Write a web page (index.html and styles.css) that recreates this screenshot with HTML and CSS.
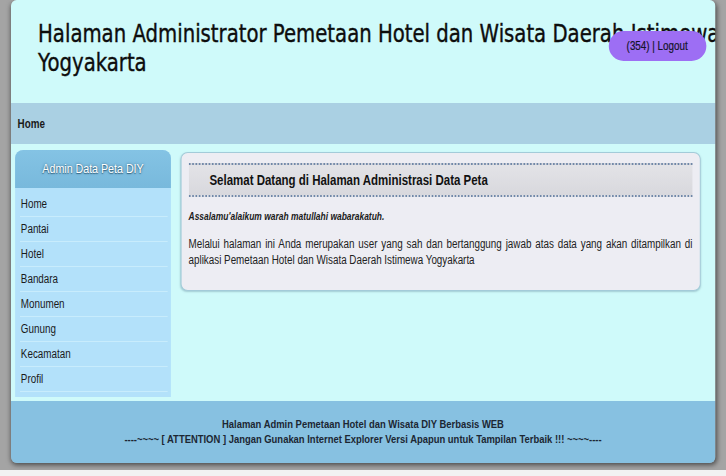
FILE: index.html
```html
<!DOCTYPE html>
<html lang="id">
<head>
<meta charset="utf-8">
<title>Halaman Administrator</title>
<link rel="stylesheet" href="styles.css">
</head>
<body>
<div class="page">
  <header class="header">
    <h1 class="title">Halaman Administrator Pemetaan Hotel dan Wisata Daerah Istimewa Yogyakarta</h1>
    <a class="logout" href="#">(354) | Logout</a>
  </header>

  <nav class="nav">
    <a class="nav-link" href="#">Home</a>
  </nav>

  <div class="main">
    <aside class="sidebar">
      <div class="sidebar-head">Admin Data Peta DIY</div>
      <ul class="menu">
        <li class="menu-item"><a href="#">Home</a></li>
        <li class="menu-item"><a href="#">Pantai</a></li>
        <li class="menu-item"><a href="#">Hotel</a></li>
        <li class="menu-item"><a href="#">Bandara</a></li>
        <li class="menu-item"><a href="#">Monumen</a></li>
        <li class="menu-item"><a href="#">Gunung</a></li>
        <li class="menu-item"><a href="#">Kecamatan</a></li>
        <li class="menu-item"><a href="#">Profil</a></li>
      </ul>
    </aside>

    <section class="content">
      <h2 class="content-head">Selamat Datang di Halaman Administrasi Data Peta</h2>
      <p class="greet">Assalamu'alaikum warah matullahi wabarakatuh.</p>
      <p class="text">Melalui halaman ini Anda merupakan user yang sah dan bertanggung jawab atas data yang akan ditampilkan di aplikasi Pemetaan Hotel dan Wisata Daerah Istimewa Yogyakarta</p>
    </section>
  </div>

  <footer class="footer">
    <div>Halaman Admin Pemetaan Hotel dan Wisata DIY Berbasis WEB</div>
    <div>----~~~~ [ ATTENTION ] Jangan Gunakan Internet Explorer Versi Apapun untuk Tampilan Terbaik !!! ~~~~----</div>
  </footer>
</div>
</body>
</html>
```
FILE: styles.css
```css
html {
  background: #f2f2f2;
  overflow: hidden;
}

body {
  margin: 0;
  padding: 0 11px 7px;
  background: #a4a4a4;
  font-family: "Liberation Sans", Arial, sans-serif;
  color: #1a1a1a;
}

a {
  color: inherit;
  text-decoration: none;
}

/* The page is laid out at a wider width and condensed horizontally,
   which gives every font the narrow look of the original theme. */
.page {
  width: 858.5px;
  transform: scaleX(0.82);
  transform-origin: 0 0;
  overflow: hidden;
  border-radius: 7px / 6px;
  box-shadow: 1px 2px 6px rgba(0, 0, 0, 0.55);
}

/* top banner */
.header {
  position: relative;
  height: 103px;
  box-sizing: border-box;
  padding: 20px 0 0 33px;
  background: #cffafa;
}

.title {
  margin: 0;
  width: 900px;
  font-family: "DejaVu Sans", sans-serif;
  font-weight: normal;
  font-size: 24px;
  line-height: 29px;
  color: #0d0d0d;
  -webkit-text-stroke: 0.4px #0d0d0d;
}

.logout {
  position: absolute;
  top: 31px;
  right: 11px;
  width: 119px;
  height: 30px;
  border-radius: 18px / 15px;
  background: #9d6ef4;
  text-align: center;
  font-size: 12px;
  line-height: 30px;
  color: #14142a;
  -webkit-text-stroke: 0.2px #14142a;
}

/* breadcrumb bar */
.nav {
  display: flex;
  align-items: center;
  height: 41px;
  padding-left: 8px;
  background: #aad0e3;
}

.nav-link {
  font-weight: bold;
  font-size: 12px;
  color: #1a1a1a;
}

/* body area */
.main {
  display: flex;
  align-items: flex-start;
  gap: 12px;
  height: 257px;
  box-sizing: border-box;
  padding: 6px 18px 0 5px;
  background: #cffafa;
}

.sidebar {
  width: 190px;
  flex: none;
  background: #b3e1fa;
  border-radius: 10px 10px 0 0 / 8px 8px 0 0;
}

.sidebar-head {
  height: 38px;
  border-radius: 10px 10px 0 0 / 8px 8px 0 0;
  background: linear-gradient(#84c3e4, #78b9dc);
  color: #fff;
  text-shadow: 0 0 3px #3a6a86, 0 1px 1px #3a6a86;
  font-size: 13px;
  line-height: 38px;
  text-align: center;
}

.menu {
  list-style: none;
  margin: 0;
  padding: 4px 4px 5px 6px;
}

.menu-item {
  height: 24px;
  border-bottom: 1px solid #c8ecfc;
  padding-left: 1px;
  font-size: 12px;
  line-height: 25px;
  color: #1a1a1a;
}

.content {
  flex: 1;
  margin-top: 2px;
  padding: 10px 8.5px 22px;
  background: #ededf3;
  border: 1px solid #a3cbd9;
  border-radius: 8.5px / 7px;
  box-shadow: 0 1px 2px rgba(80, 120, 140, 0.35);
}

.content-head {
  margin: 0 0 12px;
  height: 30px;
  padding-left: 25.5px;
  border-top: 2px dotted #6f87a8;
  border-bottom: 2px dotted #6f87a8;
  background: linear-gradient(#e3e3e7, #d8d8dd);
  font-size: 14px;
  font-weight: bold;
  line-height: 31px;
  color: #111;
}

.greet {
  margin: 0;
  font-size: 10.3px;
  font-weight: bold;
  font-style: italic;
  line-height: 16px;
}

.text {
  margin: 11px 0 0;
  font-size: 12px;
  line-height: 16px;
  text-align: justify;
  color: #222;
}

/* bottom strip */
.footer {
  height: 62px;
  box-sizing: border-box;
  padding-top: 16px;
  background: #87c1e1;
  text-align: center;
  font-size: 11.5px;
  font-weight: bold;
  line-height: 15px;
  color: #1c2733;
}
```
